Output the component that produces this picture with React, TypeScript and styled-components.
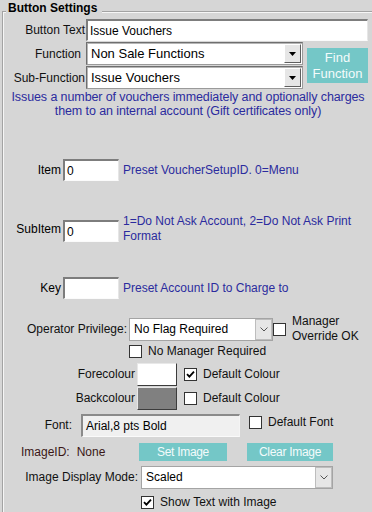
import React from "react";
import styled, { createGlobalStyle } from "styled-components";

const BG = "#d6d6d6";
const SANS = `"Liberation Sans", Arial, sans-serif`;

const Global = createGlobalStyle`
  html, body { margin: 0; padding: 0; background: ${BG}; }
  body { font-family: ${SANS}; }
`;

const Page = styled.div`
  width: 372px;
  height: 512px;
  overflow: hidden;
  background: ${BG};
  padding-top: 11px;
  box-sizing: border-box;
`;

const Frame = styled.section`
  margin-left: 2px;
  height: 520px;
  border-top: 1px solid #a3a3a3;
  border-left: 1px solid #a3a3a3;
  box-shadow: inset 1px 1px 0 #f6f6f6;
  padding-left: 1px;
  display: flex;
  flex-direction: column;
`;

const Legend = styled.div`
  align-self: flex-start;
  margin: -11px 0 0 2px;
  padding: 0 5px 0 2px;
  background: ${BG};
  font: bold 12px/14px ${SANS};
  color: #000;
`;

const TopGrid = styled.div`
  display: grid;
  grid-template-columns: 82px 217px 65px;
  grid-template-rows: 22px 23px 23px;
  row-gap: 1px;
  margin-top: 4px;
`;

const GridLabel = styled.span<{ $row: number; $pr: number }>`
  grid-column: 1;
  grid-row: ${(p) => p.$row};
  align-self: center;
  text-align: right;
  padding-right: ${(p) => p.$pr}px;
  font: 12px/14px ${SANS};
  color: #111;
  white-space: nowrap;
`;

const TextInput = styled.div<{ $w?: number; $span?: boolean }>`
  ${(p) => (p.$span ? "grid-column: 2 / 4; grid-row: 1;" : "")}
  ${(p) => (p.$w ? `width: ${p.$w}px; flex: none;` : "")}
  height: 22px;
  box-sizing: border-box;
  background: #fff;
  border-style: solid;
  border-width: 2px 1px 1px 2px;
  border-color: #7d7d7d #e6e6e6 #fbfbfb #7d7d7d;
  display: flex;
  align-items: center;
  padding-left: 2px;
  font: 12px/14px ${SANS};
  color: #000;
`;

const ClassicCombo = styled.div<{ $row: number }>`
  grid-column: 2;
  grid-row: ${(p) => p.$row};
  box-sizing: border-box;
  height: 23px;
  background: #fff;
  border: 1px solid;
  border-color: #6f6f6f #9a9a9a #9a9a9a #6f6f6f;
  box-shadow: inset 1px 1px 0 #b5b5b5;
  display: flex;
  align-items: stretch;
  font: 13px/19px ${SANS};
  color: #000;
`;

const ComboText = styled.span`
  flex: 1;
  padding-left: 4px;
  display: flex;
  align-items: center;
  white-space: nowrap;
`;

const ClassicArrow = styled.span`
  flex: none;
  width: 17px;
  margin: 1px;
  box-sizing: border-box;
  background: #e6e6e6;
  border: 1px solid;
  border-color: #ffffff #5f5f5f #5f5f5f #ffffff;
  display: flex;
  align-items: center;
  justify-content: center;
`;

const TealButton = styled.div<{ $w: number; $h: number; $fs: number; $ls?: number }>`
  flex: none;
  width: ${(p) => p.$w}px;
  height: ${(p) => p.$h}px;
  background: #74c7c7;
  color: #f3fbfb;
  font: ${(p) => p.$fs}px/${(p) => (p.$fs > 12 ? 16 : 14)}px ${SANS};
  letter-spacing: ${(p) => p.$ls ?? 0}px;
  display: flex;
  align-items: center;
  justify-content: center;
  text-align: center;
  white-space: nowrap;
`;

const FindButton = styled(TealButton)`
  grid-column: 3;
  grid-row: 2 / span 2;
  justify-self: end;
  align-self: center;
`;

const Desc = styled.p`
  margin: 1px 0 0;
  text-align: center;
  color: #2b2b9e;
  font: 12.5px/14px ${SANS};
  letter-spacing: -0.1px;
  white-space: nowrap;
`;

const Row = styled.div<{ $mt: number; $align?: string }>`
  display: flex;
  align-items: ${(p) => p.$align || "center"};
  margin-top: ${(p) => p.$mt}px;
`;

const SideLabel = styled.span<{ $w: number; $pr: number; $color?: string }>`
  flex: none;
  box-sizing: border-box;
  width: ${(p) => p.$w}px;
  padding-right: ${(p) => p.$pr}px;
  text-align: right;
  font: 12px/15px ${SANS};
  color: ${(p) => p.$color || "#111"};
  white-space: nowrap;
`;

const Hint = styled.span`
  margin-left: 4px;
  color: #2b2b9e;
  font: 12px/15px ${SANS};
  white-space: nowrap;
`;

const ShiftedInput = styled(TextInput)<{ $top: number }>`
  align-self: flex-start;
  margin-top: ${(p) => p.$top}px;
`;

const ModernCombo = styled.div<{ $w: number }>`
  flex: none;
  width: ${(p) => p.$w}px;
  height: 23px;
  box-sizing: border-box;
  background: #fff;
  border: 1px solid #a4a4a4;
  display: flex;
  align-items: stretch;
  font: 12px/15px ${SANS};
  color: #000;
`;

const ModernArrow = styled.span`
  flex: none;
  width: 17px;
  box-sizing: border-box;
  background: #e6e6e6;
  border: 1px solid #bdbdbd;
  display: flex;
  align-items: center;
  justify-content: center;
`;

const Box = styled.span<{ $ml: number }>`
  flex: none;
  width: 13px;
  height: 13px;
  box-sizing: border-box;
  margin-left: ${(p) => p.$ml}px;
  background: #fff;
  border: 1px solid #333;
  display: flex;
  align-items: center;
  justify-content: center;
`;

const BoxText = styled.span<{ $ml: number }>`
  margin-left: ${(p) => p.$ml}px;
  font: 12px/15px ${SANS};
  color: #111;
  white-space: nowrap;
`;

const Swatch = styled.span<{ $fill: string }>`
  flex: none;
  width: 40px;
  height: 23px;
  box-sizing: border-box;
  background: ${(p) => p.$fill};
  border: 1px solid;
  border-color: #e8e8e8 #3c3c3c #3c3c3c #e8e8e8;
`;

const FontBox = styled.div`
  flex: none;
  width: 159px;
  height: 23px;
  box-sizing: border-box;
  background: #f0f0f0;
  border-style: solid;
  border-width: 2px 1px 1px 2px;
  border-color: #8a8a8a #f4f4f4 #fafafa #8a8a8a;
  padding-left: 3px;
  display: flex;
  align-items: center;
  font: 12px/15px ${SANS};
  color: #000;
`;

const CheckGroup = styled.div<{ $ml: number; $mt: number }>`
  display: flex;
  align-items: center;
  align-self: flex-start;
  margin-left: ${(p) => p.$ml}px;
  margin-top: ${(p) => p.$mt}px;
`;

const ImageIdCell = styled.div`
  flex: none;
  width: 135px;
  box-sizing: border-box;
  padding-left: 17px;
  display: flex;
  gap: 7px;
  font: 12px/15px ${SANS};
  color: #3a1616;
`;

const Spacer = styled.span<{ $w: number }>`
  flex: none;
  width: ${(p) => p.$w}px;
`;

const Tri = () => (
  <svg width="7" height="4" viewBox="0 0 7 4">
    <path d="M0 0 H7 L3.5 4 Z" fill="#000" />
  </svg>
);

const Chevron = () => (
  <svg width="8" height="5" viewBox="0 0 8 5">
    <path d="M0.5 0.5 L4 4 L7.5 0.5" fill="none" stroke="#555" strokeWidth="1" />
  </svg>
);

const Check = ({ ml, on }: { ml: number; on?: boolean }) => (
  <Box $ml={ml}>
    {on && (
      <svg width="9" height="9" viewBox="0 0 9 9">
        <path d="M1 4.2 L3.4 6.7 L8 1.6" fill="none" stroke="#000" strokeWidth="1.8" />
      </svg>
    )}
  </Box>
);

export default function App() {
  return (
    <Page>
      <Global />
      <Frame>
        <Legend>Button Settings</Legend>
        <TopGrid>
          <GridLabel $row={1} $pr={1}>Button Text</GridLabel>
          <TextInput $span>Issue Vouchers</TextInput>
          <GridLabel $row={2} $pr={5}>Function</GridLabel>
          <ClassicCombo $row={2}>
            <ComboText>Non Sale Functions</ComboText>
            <ClassicArrow><Tri /></ClassicArrow>
          </ClassicCombo>
          <GridLabel $row={3} $pr={1}>Sub-Function</GridLabel>
          <ClassicCombo $row={3}>
            <ComboText>Issue Vouchers</ComboText>
            <ClassicArrow><Tri /></ClassicArrow>
          </ClassicCombo>
          <FindButton $w={61} $h={35} $fs={13}>
            Find
            <br />
            Function
          </FindButton>
        </TopGrid>
        <Desc>
          Issues a number of vouchers immediately and optionally charges
          <br />
          them to an internal account (Gift certificates only)
        </Desc>

        <Row $mt={41}>
          <SideLabel $w={59} $pr={2} $color="#000">Item</SideLabel>
          <TextInput $w={56}>0</TextInput>
          <Hint>Preset VoucherSetupID. 0=Menu</Hint>
        </Row>
        <Row $mt={33}>
          <SideLabel $w={59} $pr={2} $color="#000">SubItem</SideLabel>
          <ShiftedInput $w={56} $top={6}>0</ShiftedInput>
          <Hint>
            1=Do Not Ask Account, 2=Do Not Ask Print
            <br />
            Format
          </Hint>
        </Row>
        <Row $mt={33}>
          <SideLabel $w={59} $pr={2} $color="#000">Key</SideLabel>
          <TextInput $w={56} />
          <Hint>Preset Account ID to Charge to</Hint>
        </Row>

        <Row $mt={15}>
          <SideLabel $w={125} $pr={2}>Operator Privilege:</SideLabel>
          <ModernCombo $w={144}>
            <ComboText>No Flag Required</ComboText>
            <ModernArrow><Chevron /></ModernArrow>
          </ModernCombo>
          <Check ml={0} />
          <BoxText $ml={6}>
            Manager
            <br />
            Override OK
          </BoxText>
        </Row>
        <Row $mt={0}>
          <Check ml={125} />
          <BoxText $ml={6}>No Manager Required</BoxText>
        </Row>
        <Row $mt={4}>
          <SideLabel $w={133} $pr={2}>Forecolour</SideLabel>
          <Swatch $fill="#ffffff" />
          <Check ml={7} on />
          <BoxText $ml={6}>Default Colour</BoxText>
        </Row>
        <Row $mt={1}>
          <SideLabel $w={133} $pr={2}>Backcolour</SideLabel>
          <Swatch $fill="#808080" />
          <Check ml={7} />
          <BoxText $ml={6}>Default Colour</BoxText>
        </Row>
        <Row $mt={4}>
          <SideLabel $w={77} $pr={9}>Font:</SideLabel>
          <FontBox>Arial,8 pts Bold</FontBox>
          <CheckGroup $ml={9} $mt={1}>
            <Check ml={0} />
            <BoxText $ml={6}>Default Font</BoxText>
          </CheckGroup>
        </Row>
        <Row $mt={6}>
          <ImageIdCell>
            <span>ImageID:</span>
            <span>None</span>
          </ImageIdCell>
          <TealButton $w={88} $h={18} $fs={12} $ls={-0.3}>Set Image</TealButton>
          <Spacer $w={20} />
          <TealButton $w={86} $h={18} $fs={12} $ls={-0.3}>Clear Image</TealButton>
        </Row>
        <Row $mt={5}>
          <SideLabel $w={137} $pr={3}>Image Display Mode:</SideLabel>
          <ModernCombo $w={192}>
            <ComboText>Scaled</ComboText>
            <ModernArrow><Chevron /></ModernArrow>
          </ModernCombo>
        </Row>
        <Row $mt={6}>
          <Check ml={137} on />
          <BoxText $ml={6}>Show Text with Image</BoxText>
        </Row>
      </Frame>
    </Page>
  );
}
